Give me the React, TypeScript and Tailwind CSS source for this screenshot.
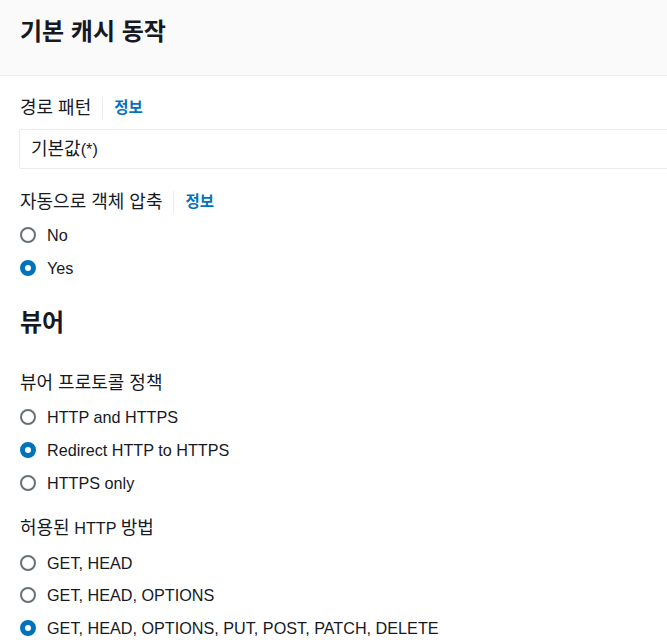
import React from 'react';

const FONT = '"Liberation Sans", "Noto Sans CJK KR", sans-serif';

// Hangul in the reference renders wider than the Latin text around it
const Ko = ({ children }: { children: React.ReactNode }) => (
  <span className="text-[18px]">{children}</span>
);

const Info = () => (
  <>
    <span className="mx-[11px] h-[22px] w-px bg-[#eaeded]" />
    <span className="text-[15.5px] font-bold text-[#0073bb]">정보</span>
  </>
);

const Radio = ({ label, checked, className = '' }: { label: string; checked?: boolean; className?: string }) => (
  <div className={`flex h-[22px] items-center ${className}`}>
    <span
      className={`box-border h-[16px] w-[16px] rounded-full ${
        checked ? 'border-[5px] border-[#0073bb] bg-white' : 'border-2 border-[#687078] bg-white'
      }`}
    />
    <span className="ml-[11px] text-[16.2px] text-[#16191f]">{label}</span>
  </div>
);

export default function App() {
  return (
    <div className="min-h-[644px] w-[667px] overflow-hidden bg-white text-[#16191f]" style={{ fontFamily: FONT }}>
      {/* Header */}
      <div className="h-[76px] border-b border-[#eaeded] bg-[#fafafa] px-[20px] pt-[17px]">
        <h2 className="text-[24px] font-bold leading-[30px]">기본 캐시 동작</h2>
      </div>

      <div className="px-[20px]">
        {/* 경로 패턴 */}
        <div className="mt-[21px] flex h-[22px] items-center">
          <Ko>경로 패턴</Ko>
          <Info />
        </div>
        <div className="-ml-px mt-[10px] flex h-[40px] w-[700px] items-center rounded-[2px] border border-[#eaeded] pl-[11px]">
          <Ko>기본값</Ko>
          <span className="text-[16.2px]">(*)</span>
        </div>

        {/* 자동으로 객체 압축 */}
        <div className="mt-[22px] flex h-[22px] items-center">
          <Ko>자동으로 객체 압축</Ko>
          <Info />
        </div>
        <Radio label="No" className="mt-[11px]" />
        <Radio label="Yes" checked className="mt-[11px]" />

        {/* 뷰어 */}
        <h2 className="mt-[29px] h-[30px] text-[24px] font-bold leading-[30px]">뷰어</h2>

        <div className="mt-[34px] flex h-[22px] items-center">
          <Ko>뷰어 프로토콜 정책</Ko>
        </div>
        <Radio label="HTTP and HTTPS" className="mt-[12px]" />
        <Radio label="Redirect HTTP to HTTPS" checked className="mt-[11px]" />
        <Radio label="HTTPS only" className="mt-[11px]" />

        <div className="mt-[23px] flex h-[22px] items-center whitespace-pre text-[16.2px]">
          <Ko>허용된</Ko> HTTP <Ko>방법</Ko>
        </div>
        <Radio label="GET, HEAD" className="mt-[13px]" />
        <Radio label="GET, HEAD, OPTIONS" className="mt-[10px]" />
        <Radio label="GET, HEAD, OPTIONS, PUT, POST, PATCH, DELETE" checked className="mt-[11px]" />
      </div>
    </div>
  );
}
